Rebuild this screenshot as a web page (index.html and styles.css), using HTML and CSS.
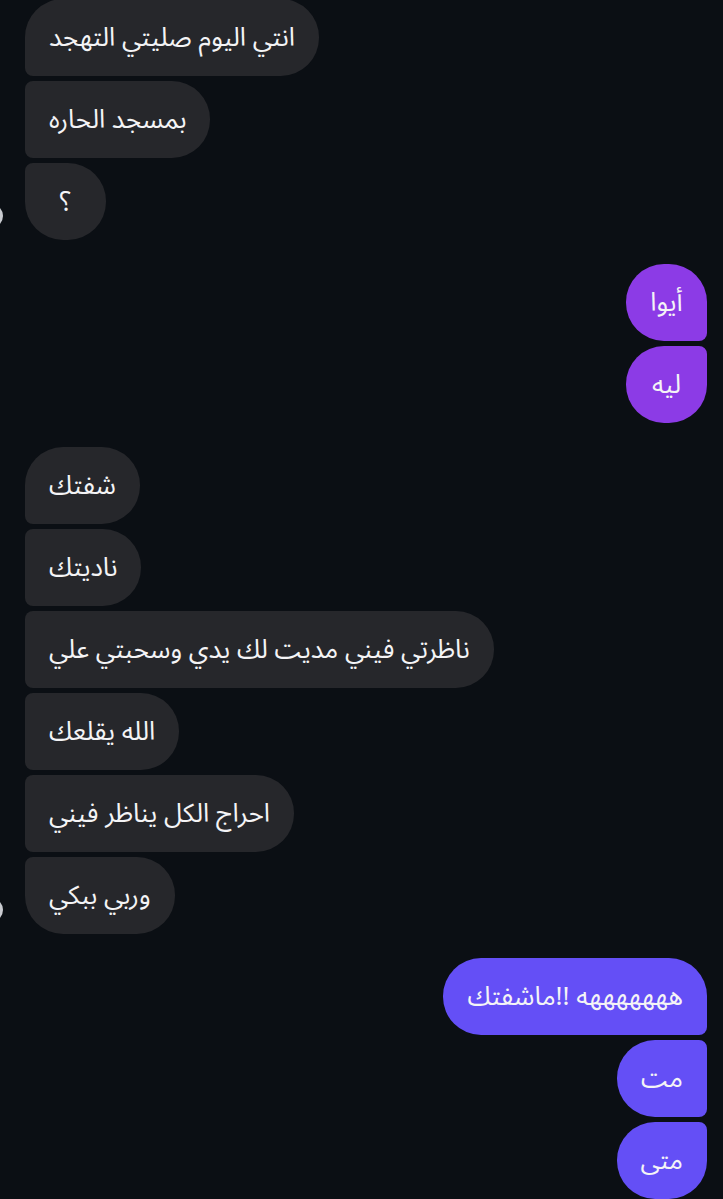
FILE: index.html
```html
<!DOCTYPE html>
<html lang="ar">
<head>
    <meta charset="UTF-8">
    <meta name="viewport" content="width=device-width, initial-scale=1.0">
    <title>Chat</title>
    <link rel="stylesheet" href="styles.css">
</head>
<body>
    <div class="thread">
        <div class="group received">
            <span class="avatar"></span>
            <div class="bubble">انتي اليوم صليتي التهجد</div>
            <div class="bubble">بمسجد الحاره</div>
            <div class="bubble">؟</div>
        </div>

        <div class="group sent purple">
            <div class="bubble">أيوا</div>
            <div class="bubble">ليه</div>
        </div>

        <div class="group received">
            <span class="avatar"></span>
            <div class="bubble">شفتك</div>
            <div class="bubble">ناديتك</div>
            <div class="bubble">ناظرتي فيني مديت لك يدي وسحبتي علي</div>
            <div class="bubble">الله يقلعك</div>
            <div class="bubble">احراج الكل يناظر فيني</div>
            <div class="bubble">وربي ببكي</div>
        </div>

        <div class="group sent violet">
            <div class="bubble">هههههههه !!ماشفتك</div>
            <div class="bubble">مت</div>
            <div class="bubble">متى</div>
        </div>
    </div>
</body>
</html>
```

FILE: styles.css
```css
/* page */
body, html {
    margin: 0;
    padding: 0;
    background: #0b0f14;
    height: 100vh;
    overflow: hidden;
}

.thread {
    display: flex;
    flex-direction: column;
    gap: 24px;
    padding: 0 16px 0 25px;
    margin-top: -1px;
    font-family: "Noto Sans Arabic", "DejaVu Sans", sans-serif;
}

.group {
    display: flex;
    flex-direction: column;
    gap: 5px;
    position: relative;
}

.received {
    align-items: flex-start;
}

.sent {
    align-items: flex-end;
}

.bubble {
    direction: rtl;
    box-sizing: border-box;
    height: 77px;
    min-width: 81px;
    padding: 0 24px;
    display: flex;
    align-items: center;
    justify-content: center;
    font-size: 26px;
    color: #f4f4f6;
    white-space: nowrap;
}

/* received bubbles: round on the right, tight on the left */
.received .bubble {
    background: #26272b;
    border-radius: 38px;
    border-top-left-radius: 8px;
    border-bottom-left-radius: 8px;
}

.received .bubble:first-of-type {
    border-top-left-radius: 38px;
}

.received .bubble:last-child {
    border-bottom-left-radius: 38px;
}

/* sent bubbles: round on the left, tight on the right */
.sent .bubble {
    border-radius: 38px;
    border-top-right-radius: 8px;
    border-bottom-right-radius: 8px;
}

.sent .bubble:first-child {
    border-top-right-radius: 38px;
}

.sent .bubble:last-child {
    border-bottom-right-radius: 38px;
}

.purple .bubble {
    background: #8c3be6;
}

.violet .bubble {
    background: #644ff6;
}

.avatar {
    position: absolute;
    left: -46px;
    bottom: 12px;
    width: 24px;
    height: 24px;
    border-radius: 50%;
    background: #c9cbd0;
}
```
